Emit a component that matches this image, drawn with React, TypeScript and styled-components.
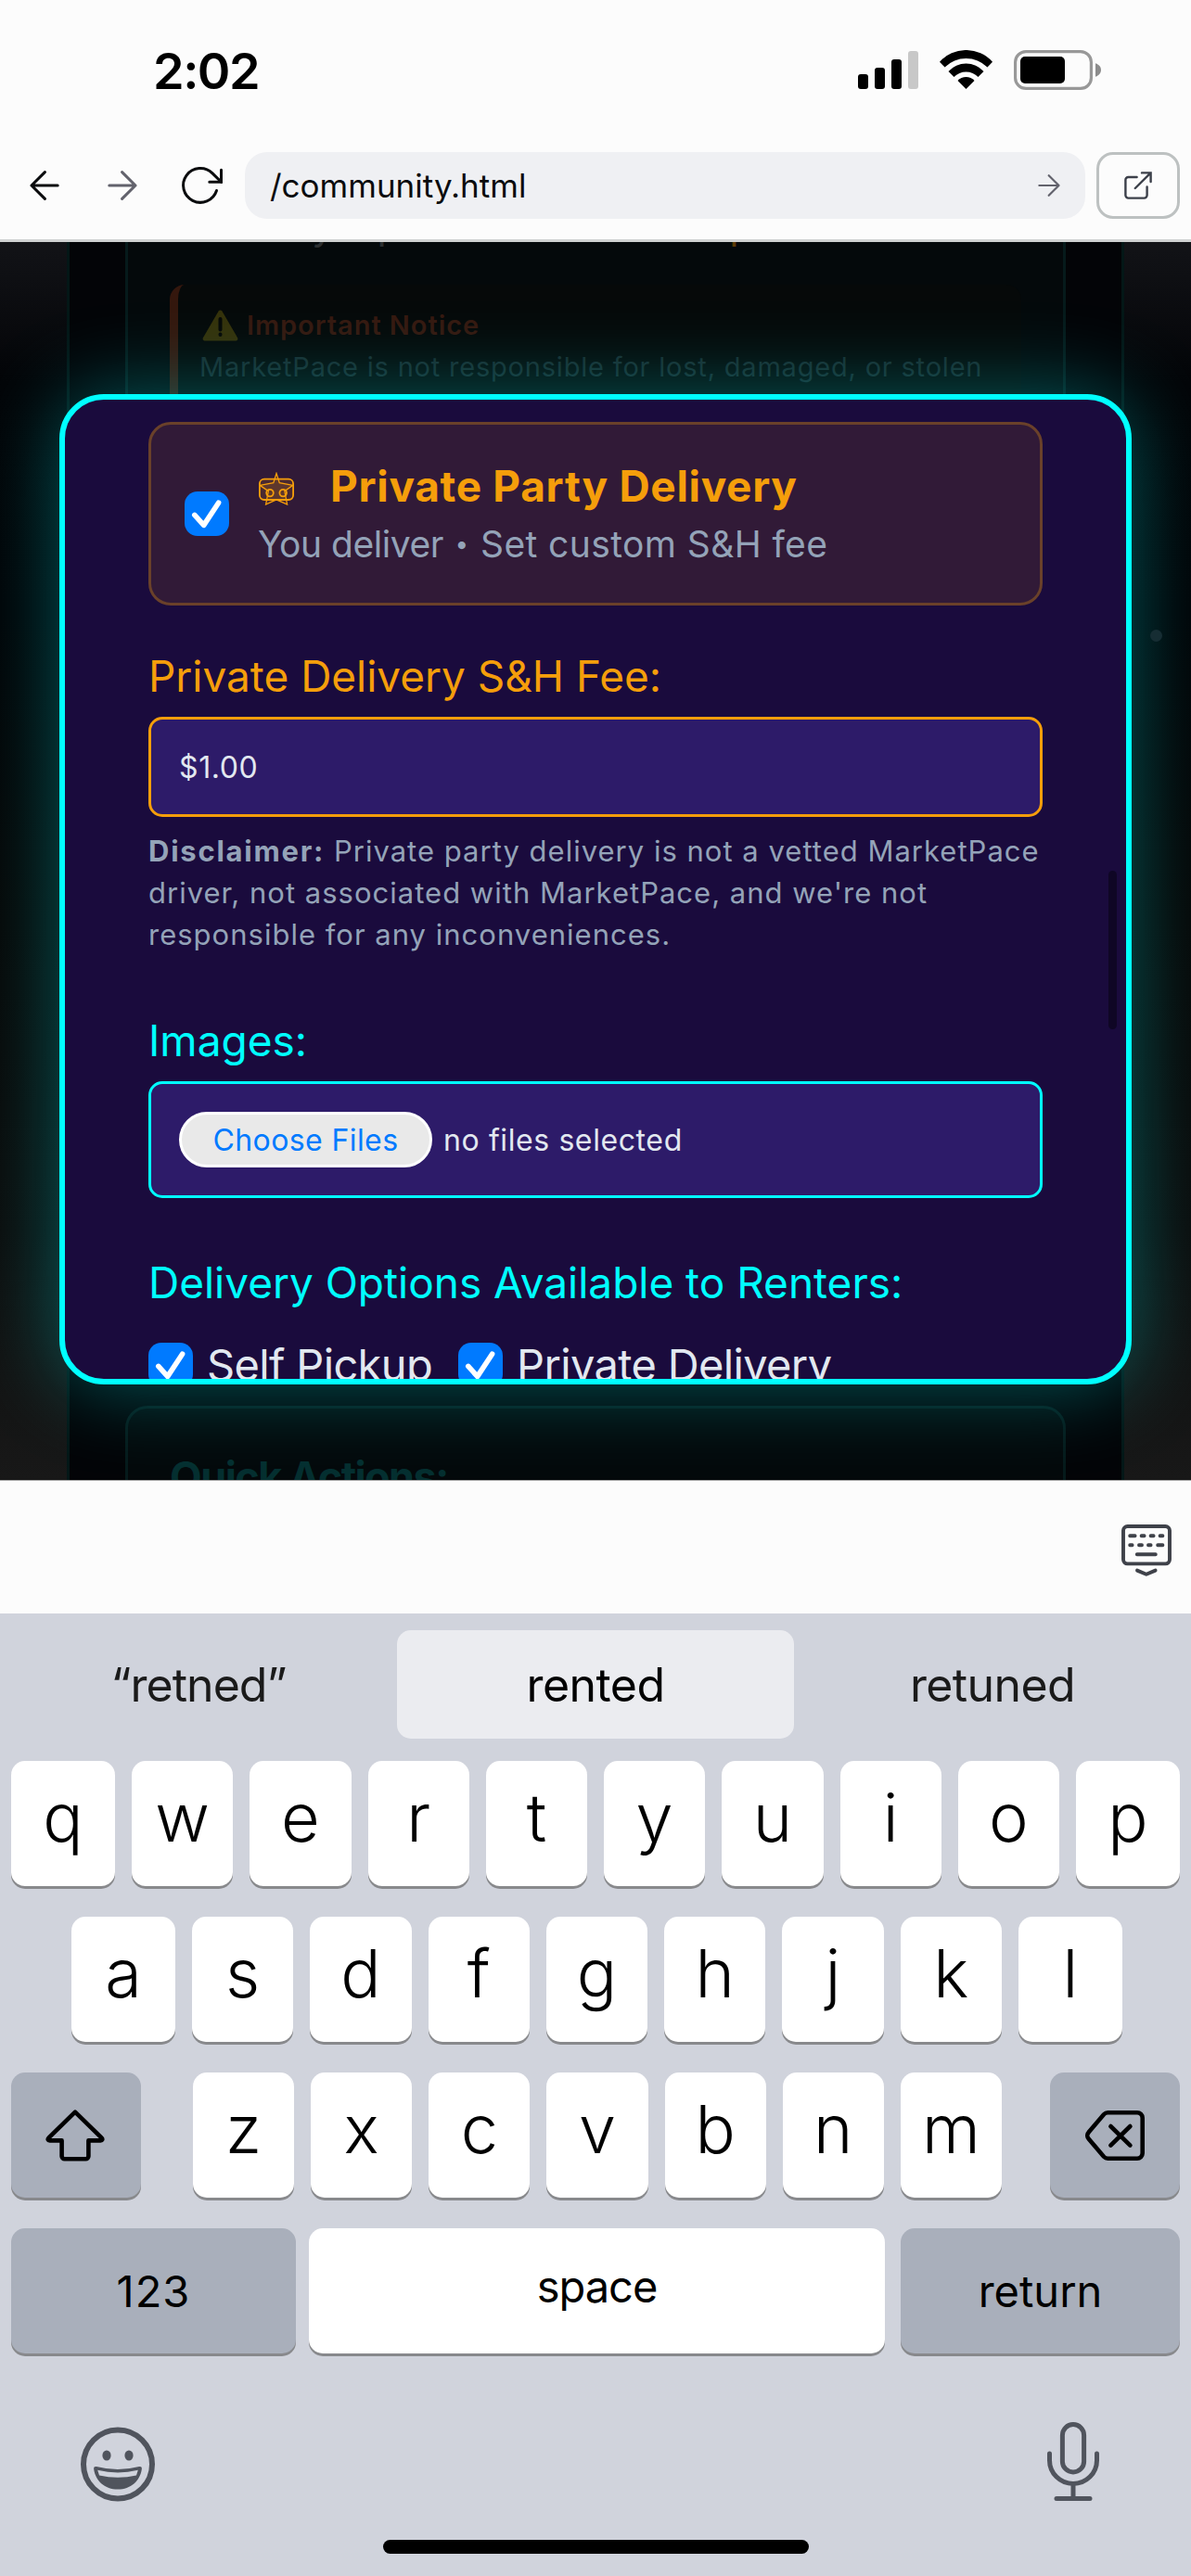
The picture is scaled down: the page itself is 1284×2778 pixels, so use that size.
import React from "react";
import styled, { createGlobalStyle, css } from "styled-components";

const GlobalStyle = createGlobalStyle`
  *, *::before, *::after { box-sizing: border-box; }
  body { margin: 0; background: #d0d3dc; font-family: Inter, "Liberation Sans", sans-serif; }
  svg { display: block; flex: none; }
  button { font: inherit; margin: 0; padding: 0; border: 0; background: none; color: inherit; }
`;

const Screen = styled.div`
  width: 1284px;
  height: 2778px;
  display: flex;
  flex-direction: column;
  overflow: hidden;
  white-space: nowrap;
`;

/* ---------- status and browser bars ---------- */

const TopBars = styled.header`
  height: 261px;
  flex: none;
  background: #fcfcfc;
  border-bottom: 3px solid #d0d2d2;
`;

const StatusBar = styled.div`
  height: 151px;
  padding: 0 97px 0 165px;
  display: flex;
  align-items: center;
  gap: 23px;
`;

const Clock = styled.time`
  flex: 1;
  padding-top: 2px;
  font-size: 54px;
  line-height: 64px;
  font-weight: 600;
  letter-spacing: -1.5px;
  color: #000;
`;

const AddressRow = styled.nav`
  height: 72px;
  margin-top: 13px;
  padding: 0 12px 0 32px;
  display: flex;
  align-items: center;
`;

const NavButton = styled.button<{ $after: number; $muted?: boolean }>`
  margin-right: ${(p) => p.$after}px;
  color: ${(p) => (p.$muted ? "#62626c" : "#0b0c0e")};
`;

const AddressField = styled.div`
  flex: 1;
  height: 72px;
  margin-right: 12px;
  padding: 0 27px 0 27px;
  display: flex;
  align-items: center;
  justify-content: space-between;
  border-radius: 24px;
  background: #eff0f3;
  color: #62626c;
`;

const AddressText = styled.span`
  padding-bottom: 1px;
  font-size: 35px;
  line-height: 44px;
  color: #0b0c0e;
`;

const OpenButton = styled.button`
  width: 90px;
  height: 72px;
  display: flex;
  align-items: center;
  justify-content: center;
  border: 3px solid #bdc1c1;
  border-radius: 18px;
  color: #3c404a;
`;

/* ---------- dimmed page behind the dialog ---------- */

const Viewport = styled.main`
  position: relative;
  height: 1335px;
  flex: none;
  display: flex;
  overflow: hidden;
  background: linear-gradient(#121317 0, #030407 150px, #020306 30%, #070707 55%, #0c0c0c 80%, #181818 100%);
`;

const DimPanel = styled.div`
  flex: 1;
  margin: 0 72px;
  padding: 0 60px;
  display: flex;
  flex-direction: column;
  border: solid #041717;
  border-width: 0 3px;
  background: #030407;
`;

const DimCard = styled.section<{ $open?: boolean }>`
  display: flex;
  flex-direction: column;
  flex: none;
  border: 3px solid #061a1b;
  background: #04090b;
  ${(p) =>
    p.$open
      ? css`
          height: 200px;
          margin-top: 65px;
          padding: 46px 45px;
          border-radius: 24px;
        `
      : css`
          height: 1190px;
          padding: 0 45px;
          border-width: 0 3px 3px;
          border-radius: 0 0 24px 24px;
        `}
`;

const CutLine = styled.div`
  display: flex;
  height: 20px;
  margin-top: -28px;
  padding-left: 153px;
  gap: 47px;
  font-size: 42px;
  line-height: 20px;
  color: #2b2f31;
`;

const CutAccent = styled.span`
  margin-left: 307px;
  color: #5c3b06;
`;

const Notice = styled.div`
  margin: 54px 0 0;
  height: 240px;
  padding: 22px 23px;
  border-left: 9px solid #34170d;
  border-radius: 16px;
  background: #060909;
`;

const NoticeTitle = styled.div`
  height: 44px;
  padding: 0 0 1px 3px;
  display: flex;
  align-items: center;
  gap: 9px;
  font-size: 29px;
  font-weight: 600;
  letter-spacing: 0.96px;
  color: #36180f;
`;

const NoticeText = styled.div`
  margin-top: 2px;
  font-size: 29px;
  line-height: 41px;
  letter-spacing: 0.8px;
  color: #192a2d;
`;

const DimHeading = styled.h3`
  margin: 0;
  font-size: 45px;
  line-height: 56px;
  font-weight: 700;
  letter-spacing: -1.6px;
  color: #052f30;
`;

const Particle = styled.i`
  position: absolute;
  left: 1240px;
  top: 418px;
  width: 13px;
  height: 13px;
  border-radius: 50%;
  background: #162d33;
`;

/* ---------- dialog ---------- */

const Dialog = styled.section`
  position: absolute;
  left: 64px;
  top: 164px;
  width: 1156px;
  height: 1068px;
  padding: 24px 90px 0;
  display: flex;
  flex-direction: column;
  overflow: hidden;
  border: 6px solid #00ffff;
  border-radius: 48px;
  background: #1a0b3d;
  box-shadow: 0 0 90px rgba(0, 255, 255, 0.34);
`;

const ScrollThumb = styled.i`
  position: absolute;
  right: 10px;
  top: 508px;
  width: 9px;
  height: 171px;
  border-radius: 5px;
  background: #0f0625;
`;

const OptionCard = styled.div`
  height: 198px;
  flex: none;
  padding: 0 36px;
  display: flex;
  align-items: center;
  gap: 32px;
  border: 3px solid #6a412a;
  border-radius: 24px;
  background: #311a37;
`;

const OptionTitle = styled.div`
  height: 56px;
  margin-bottom: 10px;
  display: flex;
  align-items: center;
  gap: 39px;
  font-size: 46px;
  font-weight: 700;
  letter-spacing: 0.68px;
  color: #f59e0b;

  svg { margin-top: 6px; }
`;

const OptionHint = styled.div`
  display: flex;
  align-items: center;
  margin-left: -1px;
  font-size: 39px;
  line-height: 50px;
  letter-spacing: 0.4px;
  color: #94a3b8;
`;

const HintLead = styled.span`
  letter-spacing: -0.45px;
`;

const Bullet = styled.span`
  width: 40px;
  font-size: 26px;
  text-align: center;
`;

const FieldLabel = styled.label<{ $top: number; $accent?: boolean; $spacing: number }>`
  flex: none;
  margin-top: ${(p) => p.$top}px;
  font-size: 46px;
  line-height: 56px;
  letter-spacing: ${(p) => p.$spacing}px;
  color: ${(p) => (p.$accent ? "#f59e0b" : "#00ffff")};
`;

const Field = styled.div<{ $tall?: boolean; $accent?: boolean }>`
  flex: none;
  height: ${(p) => (p.$tall ? 126 : 108)}px;
  margin-top: 16px;
  padding: 0 30px;
  display: flex;
  align-items: center;
  gap: 12px;
  border: 3px solid ${(p) => (p.$accent ? "#f59e0b" : "#00ffff")};
  border-radius: 15px;
  background: #2d1b69;
  font-size: 32px;
  letter-spacing: 0.6px;
  color: #e2e8f0;
`;

const FileButton = styled.button`
  width: 273px;
  height: 60px;
  border: 3px solid #fff;
  border-radius: 30px;
  background: #e9e9e9;
  letter-spacing: 0.4px;
  color: #007aff;
`;

const Disclaimer = styled.p`
  flex: none;
  margin: 14px 0 0;
  font-size: 31px;
  line-height: 45px;
  letter-spacing: 1.01px;
  color: #94a3b8;

  strong { letter-spacing: 1.75px; }
`;

const CheckRow = styled.div`
  flex: none;
  margin-top: 37px;
  display: flex;
  gap: 28px;
`;

const CheckOption = styled.label`
  height: 48px;
  display: flex;
  align-items: center;
  gap: 15px;
  font-size: 47px;
  line-height: 50px;
  letter-spacing: -0.65px;
  color: #e2e8f0;
`;

/* ---------- keyboard ---------- */

const AccessoryBar = styled.div`
  height: 144px;
  flex: none;
  padding: 47px 21px 0;
  display: flex;
  justify-content: flex-end;
  border-top: 1px solid #a8a8a8;
  background: #fcfcfc;
`;

const Keyboard = styled.div`
  flex: 1;
  padding: 0 12px;
  display: flex;
  flex-direction: column;
  background: #d0d3dc;
`;

const Suggestions = styled.div`
  height: 159px;
  margin: 0 -12px;
  padding: 18px 0 24px;
  display: grid;
  grid-template-columns: repeat(3, 1fr);
`;

const Suggestion = styled.button<{ $active?: boolean; $spacing: number }>`
  font-size: 50px;
  letter-spacing: ${(p) => p.$spacing}px;
  border-radius: 15px;
  background: ${(p) => (p.$active ? "#ebecf0" : "transparent")};
  color: ${(p) => (p.$active ? "#000" : "#1a1a1a")};
`;

const KeyRow = styled.div<{ $indent?: boolean; $gap?: number }>`
  height: 135px;
  margin-bottom: 33px;
  padding: ${(p) => (p.$indent ? "0 62px 0 65px" : "0")};
  display: flex;
  gap: ${(p) => p.$gap ?? 18}px;
`;

const Letters = styled.div`
  flex: 1;
  margin: 0 52px 0 56px;
  display: flex;
  gap: 18px;
`;

const Key = styled.button<{ $edge?: boolean }>`
  flex: ${(p) => (p.$edge ? "0 0 112px" : "1 1 0")};
  min-width: 0;
  height: 135px;
  padding-bottom: 14px;
  border-radius: 15px;
  background: #fff;
  box-shadow: 0 3px 0 #88898c;
  font-size: 72px;
  font-weight: 340;
  color: #000;
`;

const WideKey = styled(Key)<{ $width: number; $dark?: boolean; $spacing?: number; $nudge?: number; $end?: boolean }>`
  flex: 0 0 ${(p) => p.$width}px;
  display: flex;
  align-items: center;
  justify-content: center;
  margin-left: ${(p) => (p.$end ? "auto" : "0")};
  padding: ${(p) => (p.$dark ? `0 ${p.$nudge ?? 0}px 0 0` : "0 0 10px")};
  background: ${(p) => (p.$dark ? "#a9afbb" : "#fff")};
  font-size: 47px;
  font-weight: 400;
  letter-spacing: ${(p) => p.$spacing ?? 0}px;
`;

const KeyboardFooter = styled.div`
  height: 86px;
  margin-top: 41px;
  padding: 0 87px 0 75px;
  display: flex;
  align-items: flex-end;
  justify-content: space-between;
`;

const HomeIndicator = styled.div`
  width: 459px;
  height: 15px;
  margin: 41px auto 0;
  border-radius: 8px;
  background: #000;
`;

/* ---------- icons ---------- */

const Signal = () => (
  <svg width="65" height="43" viewBox="0 0 65 43">
    <rect x="0" y="26" width="11" height="16" rx="3" />
    <rect x="18" y="19" width="11" height="23" rx="3" />
    <rect x="36" y="10" width="11" height="32" rx="3" />
    <rect x="54" y="1" width="11" height="41" rx="3" fill="#c8c8c8" />
  </svg>
);

const Wifi = () => (
  <svg width="57" height="43" viewBox="0 0 57 43">
    <path d="M0 12.7A38.3 38.3 0 0 1 57 12.7L51.5 18.5A32.6 32.6 0 0 0 5.5 18.5Z" />
    <path d="M9.5 23A25.5 25.5 0 0 1 47.5 23L41.5 29A18 18 0 0 0 15.5 29Z" />
    <path d="M19.5 33A12 12 0 0 1 37.5 33L28.5 42Z" />
  </svg>
);

const Battery = () => (
  <svg width="94" height="43" viewBox="0 0 94 43">
    <rect x="1.6" y="1.6" width="81.8" height="39.8" rx="11.5" fill="none" stroke="#989898" strokeWidth="3.2" />
    <rect x="7" y="7" width="48" height="29" rx="5" />
    <path d="M88 14.3C91.6 15.6 94 18.2 94 21.5S91.6 27.4 88 28.7Z" fill="#8c8c8c" />
  </svg>
);

const line = { fill: "none", stroke: "currentColor", strokeLinecap: "round", strokeLinejoin: "round" } as const;

const ArrowLeft = () => (
  <svg width="32" height="32" viewBox="0 0 32 32" {...line} strokeWidth="3">
    <path d="M30.2 16H2M16.4 1.6L2 16l14.4 14.4" />
  </svg>
);

const ArrowRight = ({ size = 32, stroke = 3 }: { size?: number; stroke?: number }) => (
  <svg width={size} height={size} viewBox="0 0 32 32" {...line} strokeWidth={stroke}>
    <path d="M1.8 16H30M15.6 1.6L30 16 15.6 30.4" />
  </svg>
);

const Reload = () => (
  <svg width="48" height="44" viewBox="0 0 48 44" {...line} strokeWidth="3">
    <path d="M39.5 27.5A18.4 18.4 0 1 1 35 8.9L44.5 18.3" />
    <path d="M44.5 5.2V18.3H31.8" strokeLinejoin="miter" />
  </svg>
);

const OpenOut = () => (
  <svg width="30" height="30" viewBox="0 0 30 30" {...line} strokeWidth="2.4">
    <path d="M13.6 6H4.4A3 3 0 0 0 1.4 9V25.6A3 3 0 0 0 4.4 28.6H21.6A3 3 0 0 0 24.6 25.6V16.4" />
    <path d="M11.8 18L28.6 1.4M19 1.4H28.6V11" strokeLinejoin="miter" />
  </svg>
);

const Warning = () => (
  <svg width="39" height="34" viewBox="0 0 39 34">
    <path d="M17.6 1.6a2.2 2.2 0 0 1 3.8 0L38.2 30.4A2.2 2.2 0 0 1 36.3 33.5H2.7A2.2 2.2 0 0 1 .8 30.4Z" fill="#35310a" />
    <path d="M19.5 10V21.5M19.5 26.6V27" stroke="#070806" strokeWidth="4" strokeLinecap="round" />
  </svg>
);

const DeliveryBadge = () => (
  <svg width="38" height="36" viewBox="0 0 38 36" fill="none" stroke="#f59e0b">
    <rect x="0.9" y="7.6" width="36.2" height="22.4" rx="5" strokeWidth="1.8" fill="#f59e0b" fillOpacity="0.12" />
    <path
      d="M19 1.5L22.3 11.6 36.8 14.4 27.8 20.6 30.6 35 19 29.8 7.6 35 10.4 20.6 1.2 14.4 15.8 11.6Z"
      strokeWidth="1.3"
      fill="#f59e0b"
      fillOpacity="0.12"
    />
    <circle cx="12" cy="22.6" r="3.8" strokeWidth="1.8" />
    <circle cx="26.2" cy="22.6" r="3.8" strokeWidth="1.8" />
  </svg>
);

const Checked = () => (
  <svg width="48" height="48" viewBox="0 0 48 48">
    <rect width="48" height="48" rx="14" fill="#007aff" />
    <path d="M10.8 25.4L20.7 36.4 36.6 12.2" {...line} stroke="#fff" strokeWidth="5.6" />
  </svg>
);

const HideKeyboard = () => (
  <svg width="54" height="57" viewBox="0 0 54 57" {...line} stroke="#3f424a" strokeWidth="3.9">
    <rect x="2" y="2" width="50" height="40.4" rx="4.6" />
    <path d="M9.2 12.3H14.6M21.6 12.3H24.6M31.6 12.3H34.6M41.6 12.3H44.4M9.2 22.3H11.6M19 22.3H22M29 22.3H31.6M39.2 22.3H44.4M16.8 32.3H36.8" />
    <path d="M17 49.6L26.8 53.8 36.6 49.6" />
  </svg>
);

const Shift = () => (
  <svg width="64" height="56" viewBox="0 0 64 56" {...line} strokeWidth="4.6">
    <path d="M32 2.6L3.6 30.4C2 32 2.6 33.4 4.6 33.4H17.6V50.2A3 3 0 0 0 20.6 53.2H43.4A3 3 0 0 0 46.4 50.2V33.4H59.4C61.4 33.4 62 32 60.4 30.4Z" />
  </svg>
);

const Backspace = () => (
  <svg width="64" height="54" viewBox="0 0 64 54" {...line} strokeWidth="4.6">
    <path d="M24.4 2.3H56A5.7 5.7 0 0 1 61.7 8V46A5.7 5.7 0 0 1 56 51.7H24.4A6 6 0 0 1 20 49.8L3.6 30.4A5 5 0 0 1 3.6 23.6L20 4.2A6 6 0 0 1 24.4 2.3Z" />
    <path d="M27.4 17L48.4 37.6M48.4 17L27.4 37.6" />
  </svg>
);

const Emoji = () => (
  <svg width="80" height="81" viewBox="0 0 80 81" fill="#50545d">
    <circle cx="40" cy="40.5" r="37" fill="none" stroke="#50545d" strokeWidth="6" />
    <ellipse cx="28" cy="31" rx="4.6" ry="5.6" />
    <ellipse cx="52" cy="31" rx="4.6" ry="5.6" />
    <path d="M17 43Q40 49 63 43Q66.4 42.4 65.8 46C64 58.4 54 67.6 40 67.6S16 58.4 14.2 46Q13.6 42.4 17 43Z" />
    <path d="M18.2 46.8Q40 52 61.8 46.8L60 52.4Q40 57 20 52.4Z" fill="#d0d3dc" />
  </svg>
);

const Mic = () => (
  <svg width="56" height="86" viewBox="0 0 56 86" {...line} stroke="#50545d" strokeWidth="5">
    <rect x="16.4" y="2.6" width="23.2" height="51.4" rx="11.6" />
    <path d="M2.5 34V41.2A25.5 25.2 0 0 0 53.5 41.2V34M28 66.6V82M10 82.6H46" />
  </svg>
);

const LETTER_ROWS = ["qwertyuiop", "asdfghjkl", "zxcvbnm"];

const keysOf = (row: string, wideEdges = false) =>
  row.split("").map((k, i) => (
    <Key key={k} $edge={wideEdges && (i === 0 || i === row.length - 1)}>
      {k}
    </Key>
  ));

export default function App() {
  return (
    <Screen>
      <GlobalStyle />
      <TopBars>
        <StatusBar>
          <Clock>2:02</Clock>
          <Signal />
          <Wifi />
          <Battery />
        </StatusBar>
        <AddressRow>
          <NavButton $after={52}><ArrowLeft /></NavButton>
          <NavButton $after={46} $muted><ArrowRight /></NavButton>
          <NavButton $after={22}><Reload /></NavButton>
          <AddressField>
            <AddressText>/community.html</AddressText>
            <ArrowRight size={24} stroke={2.9} />
          </AddressField>
          <OpenButton><OpenOut /></OpenButton>
        </AddressRow>
      </TopBars>

      <Viewport>
        <DimPanel>
          <DimCard>
            <CutLine>
              <span>y</span>
              <span>p</span>
              <CutAccent>p</CutAccent>
            </CutLine>
            <Notice>
              <NoticeTitle><Warning />Important Notice</NoticeTitle>
              <NoticeText>
                MarketPace is not responsible for lost, damaged, or stolen
                <br />
                rental items.
              </NoticeText>
            </Notice>
          </DimCard>
          <DimCard $open>
            <DimHeading>Quick Actions:</DimHeading>
          </DimCard>
        </DimPanel>

        <Dialog>
          <OptionCard>
            <Checked />
            <div>
              <OptionTitle><DeliveryBadge />Private Party Delivery</OptionTitle>
              <OptionHint>
                <HintLead>You deliver</HintLead>
                <Bullet>•</Bullet>
                <span>Set custom S&amp;H fee</span>
              </OptionHint>
            </div>
          </OptionCard>

          <FieldLabel $top={48} $spacing={-0.03} $accent>Private Delivery S&amp;H Fee:</FieldLabel>
          <Field $accent>$1.00</Field>
          <Disclaimer>
            <strong>Disclaimer:</strong> Private party delivery is not a vetted MarketPace
            <br />
            driver, not associated with MarketPace, and we're not
            <br />
            responsible for any inconveniences.
          </Disclaimer>

          <FieldLabel $top={64} $spacing={0}>Images:</FieldLabel>
          <Field $tall>
            <FileButton>Choose Files</FileButton>
            <span>no files selected</span>
          </Field>

          <FieldLabel $top={63} $spacing={-0.02}>Delivery Options Available to Renters:</FieldLabel>
          <CheckRow>
            <CheckOption><Checked />Self Pickup</CheckOption>
            <CheckOption><Checked />Private Delivery</CheckOption>
          </CheckRow>
          <ScrollThumb />
        </Dialog>
        <Particle />
      </Viewport>

      <AccessoryBar><HideKeyboard /></AccessoryBar>

      <Keyboard>
        <Suggestions>
          <Suggestion $spacing={-1}>“retned”</Suggestion>
          <Suggestion $spacing={-0.55} $active>rented</Suggestion>
          <Suggestion $spacing={-0.6}>retuned</Suggestion>
        </Suggestions>
        <KeyRow>{keysOf(LETTER_ROWS[0], true)}</KeyRow>
        <KeyRow $indent>{keysOf(LETTER_ROWS[1], true)}</KeyRow>
        <KeyRow $gap={0}>
          <WideKey $width={140} $dark $nudge={3}><Shift /></WideKey>
          <Letters>{keysOf(LETTER_ROWS[2])}</Letters>
          <WideKey $width={140} $dark><Backspace /></WideKey>
        </KeyRow>
        <KeyRow $gap={14}>
          <WideKey $width={307} $dark $spacing={1}>123</WideKey>
          <WideKey $width={621} $spacing={-1}>space</WideKey>
          <WideKey $width={301} $dark $end>return</WideKey>
        </KeyRow>
        <KeyboardFooter>
          <Emoji />
          <Mic />
        </KeyboardFooter>
        <HomeIndicator />
      </Keyboard>
    </Screen>
  );
}
